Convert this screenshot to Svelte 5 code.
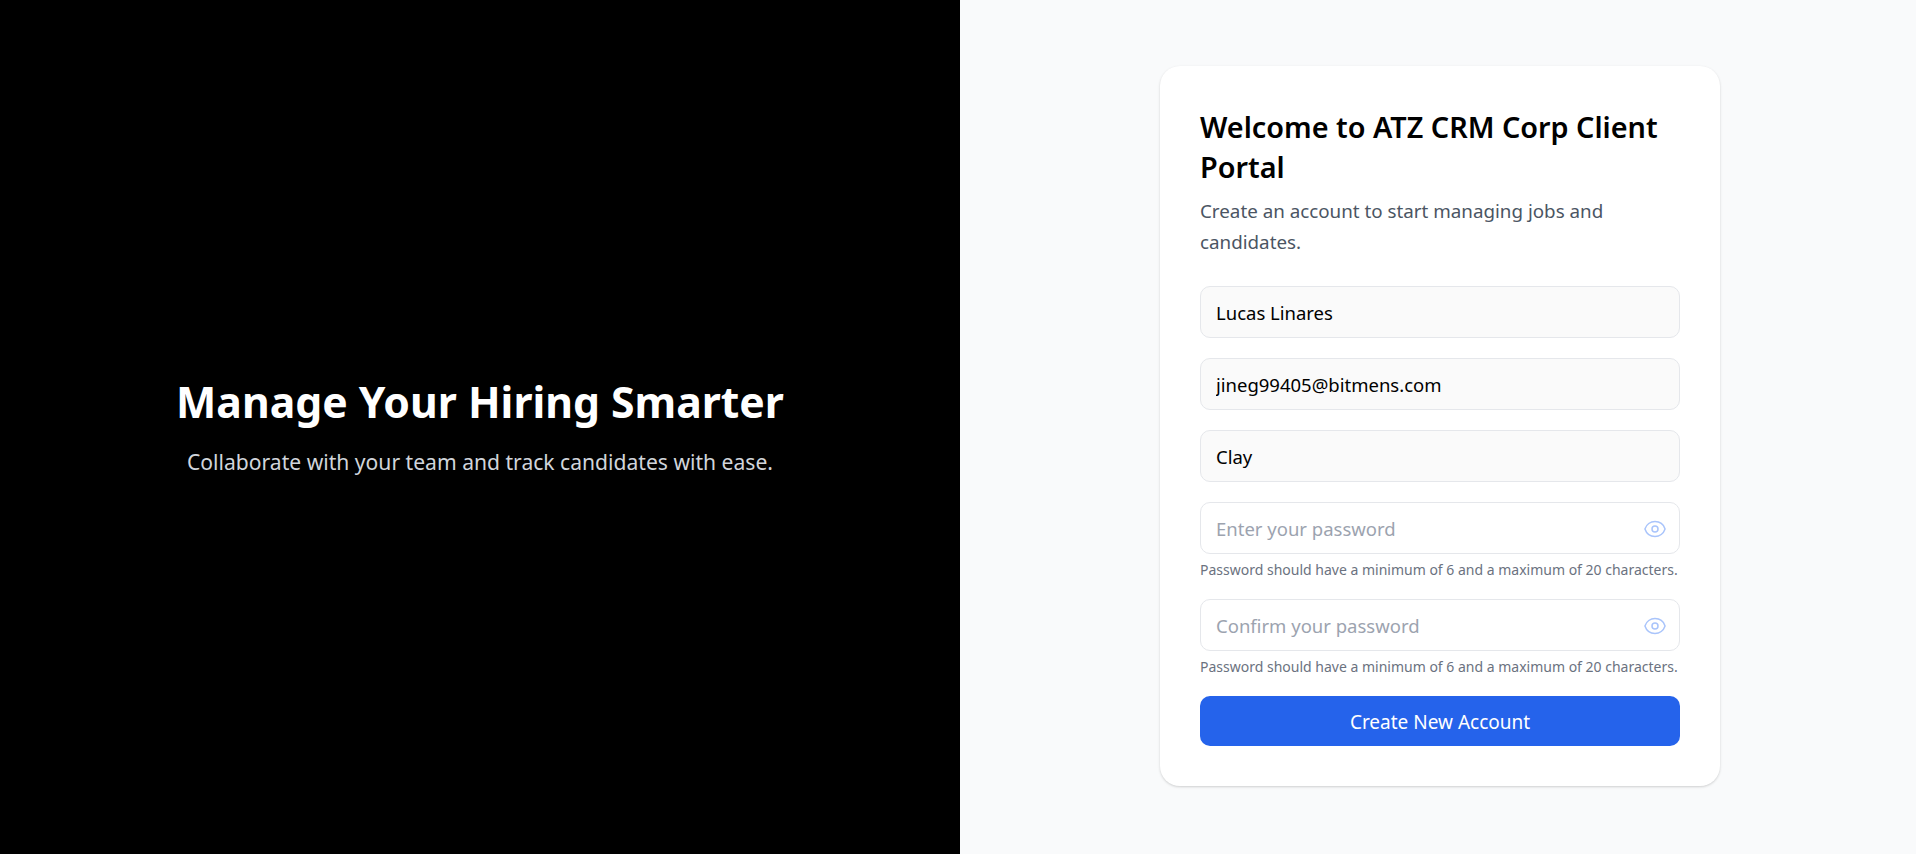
<script lang="ts">
	const fields = [
		{ value: 'Lucas Linares', type: 'text' },
		{ value: 'jineg99405@bitmens.com', type: 'email' },
		{ value: 'Clay', type: 'text' }
	];
	const passwords = ['Enter your password', 'Confirm your password'];
</script>

<div class="page">
	<section class="hero">
		<h2>Manage Your Hiring Smarter</h2>
		<p>Collaborate with your team and track candidates with ease.</p>
	</section>

	<section class="side">
		<form class="card" onsubmit={(e) => e.preventDefault()}>
			<h1>Welcome to ATZ CRM Corp Client Portal</h1>
			<p class="sub">Create an account to start managing jobs and candidates.</p>

			<div class="fields">
				{#each fields as field}
					<input class="filled" type={field.type} value={field.value} />
				{/each}

				{#each passwords as placeholder}
					<div>
						<div class="password">
							<input type="password" {placeholder} />
							<svg viewBox="0 0 24 24" width="24" height="24" fill="none" stroke="currentColor" stroke-width="1.5" stroke-linecap="round" stroke-linejoin="round">
								<path d="M2.04 12.32a1 1 0 0 1 0-.64C3.42 7.51 7.36 4.5 12 4.5c4.64 0 8.57 3 9.96 7.18.07.2.07.43 0 .64C20.58 16.49 16.64 19.5 12 19.5c-4.64 0-8.57-3-9.96-7.18Z" />
								<circle cx="12" cy="12" r="3" />
							</svg>
						</div>
						<small>Password should have a minimum of 6 and a maximum of 20 characters.</small>
					</div>
				{/each}

				<button type="submit">Create New Account</button>
			</div>
		</form>
	</section>
</div>

<style>
	:global(body) {
		margin: 0;
		font-family: 'Noto Sans', 'Open Sans', sans-serif;
	}

	:global(*) {
		box-sizing: border-box;
	}

	.page {
		display: grid;
		grid-template-columns: 960px 1fr;
		height: 854px;
	}

	.hero {
		background: #000;
		color: #fff;
		display: flex;
		flex-direction: column;
		align-items: center;
		justify-content: center;
		text-align: center;
	}

	.hero h2 {
		margin: 0 0 22px;
		font-size: 42.7px;
		line-height: 48px;
		font-weight: 700;
	}

	.hero p {
		margin: 0;
		font-size: 21.1px;
		line-height: 28px;
		color: #d1d5db;
	}

	.side {
		background: #f9fafb;
		display: flex;
		align-items: center;
		justify-content: center;
		padding: 0 0 2px 4px;
	}

	.card {
		width: 560px;
		height: 720px;
		padding: 41px 40px 40px;
		background: #fff;
		border-radius: 20px;
		box-shadow: 0 1px 3px rgba(0, 0, 0, 0.12), 0 1px 2px rgba(0, 0, 0, 0.06);
	}

	h1 {
		margin: 0 0 9px;
		font-size: 28.8px;
		line-height: 40px;
		font-weight: 600;
		color: #000;
	}

	.sub {
		margin: 0 0 28px;
		font-size: 18.8px;
		line-height: 31px;
		color: #4b5563;
	}

	.fields {
		display: flex;
		flex-direction: column;
		gap: 20px;
	}

	input {
		display: block;
		width: 100%;
		height: 52px;
		padding: 0 15px;
		border: 1px solid #e5e7eb;
		border-radius: 10px;
		background: #fff;
		font: inherit;
		font-size: 18.5px;
		color: #000;
		outline: none;
	}

	input.filled {
		background: #fafafa;
	}

	input::placeholder {
		color: #9ca3af;
		opacity: 1;
	}

	.password {
		position: relative;
	}

	.password svg {
		position: absolute;
		right: 13px;
		top: 15px;
		color: #a9c4fb;
	}

	small {
		display: block;
		margin: 6px 0 -1px;
		font-size: 14px;
		line-height: 20px;
		color: #6b7280;
		white-space: nowrap;
	}

	button {
		height: 50px;
		padding: 2px 0 0;
		border: none;
		border-radius: 10px;
		background: #2563eb;
		color: #fff;
		font: inherit;
		font-size: 19px;
		cursor: pointer;
	}
</style>
